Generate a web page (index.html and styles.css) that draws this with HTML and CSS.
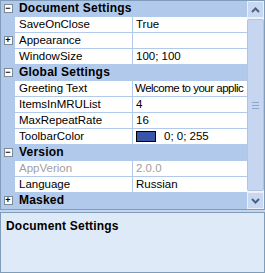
FILE: index.html
```
<!DOCTYPE html>
<html lang="en">
<head>
    <meta charset="UTF-8">
    <title>Property Grid</title>
    <link rel="stylesheet" href="styles.css">
</head>
<body>
    <div class="frame">
        <div class="grid">
            <div class="rows">
                <div class="row cat"><span class="gut"><span class="box">&minus;</span></span><span class="cat-name">Document Settings</span></div>
                <div class="row"><span class="gut"></span><span class="name">SaveOnClose</span><span class="value">True</span></div>
                <div class="row"><span class="gut"><span class="box">+</span></span><span class="name">Appearance</span><span class="value"></span></div>
                <div class="row"><span class="gut"></span><span class="name">WindowSize</span><span class="value">100; 100</span></div>
                <div class="row cat"><span class="gut"><span class="box">&minus;</span></span><span class="cat-name">Global Settings</span></div>
                <div class="row"><span class="gut"></span><span class="name">Greeting Text</span><span class="value tight">Welcome to your applic</span></div>
                <div class="row"><span class="gut"></span><span class="name">ItemsInMRUList</span><span class="value">4</span></div>
                <div class="row"><span class="gut"></span><span class="name">MaxRepeatRate</span><span class="value">16</span></div>
                <div class="row"><span class="gut"></span><span class="name">ToolbarColor</span><span class="value"><span class="swatch"></span>0; 0; 255</span></div>
                <div class="row cat"><span class="gut"><span class="box">&minus;</span></span><span class="cat-name">Version</span></div>
                <div class="row off"><span class="gut"></span><span class="name">AppVerion</span><span class="value">2.0.0</span></div>
                <div class="row"><span class="gut"></span><span class="name">Language</span><span class="value">Russian</span></div>
                <div class="row cat"><span class="gut"><span class="box">+</span></span><span class="cat-name">Masked</span></div>
            </div>
            <div class="scroll">
                <div class="arrow">
                    <svg width="9" height="6" viewBox="0 0 9 6"><path d="M1 5 L4.5 1.5 L8 5" fill="none" stroke="#4d6185" stroke-width="2"/></svg>
                </div>
                <div class="thumb">
                    <span class="grip"></span>
                </div>
                <div class="arrow">
                    <svg width="9" height="6" viewBox="0 0 9 6"><path d="M1 1 L4.5 4.5 L8 1" fill="none" stroke="#4d6185" stroke-width="2"/></svg>
                </div>
            </div>
        </div>
        <div class="help">
            <div class="help-title">Document Settings</div>
        </div>
    </div>
</body>
</html>
```

FILE: styles.css
```
body {
    margin: 0;
    font-family: 'Liberation Sans', Arial, sans-serif;
    font-size: 11.5px;
    color: #000;
}

.frame {
    width: 265px;
    height: 273px;
    background-color: #c4d6ef;
    display: flex;
    flex-direction: column;
    gap: 2px;
}

/* Сетка свойств */
.grid {
    height: 210px;
    display: flex;
    border: 1px solid #7f9db9;
    box-sizing: border-box;
    background-color: #b1c9eb;
}

.rows {
    flex: 1;
    display: flex;
    flex-direction: column;
    overflow: hidden;
}

.row {
    height: 16px;
    display: flex;
    flex-shrink: 0;
    background-color: #fff;
    border-bottom: 1px solid #b1c9eb;
    box-sizing: border-box;
}

.row.cat {
    background-color: #b1c9eb;
}

.gut {
    width: 14px;
    flex-shrink: 0;
    background-color: #b1c9eb;
    display: flex;
    align-items: center;
    justify-content: center;
}

.box {
    width: 7px;
    height: 7px;
    border: 1px solid #7f8a99;
    background-color: #fff;
    font-size: 9px;
    line-height: 7px;
    text-align: center;
    font-weight: bold;
    color: #000;
}

.cat-name {
    font-weight: bold;
    font-size: 12px;
    padding-left: 4px;
    line-height: 15px;
    letter-spacing: 0.2px;
}

.name {
    width: 118px;
    box-sizing: border-box;
    flex-shrink: 0;
    padding-left: 4px;
    line-height: 15px;
    border-right: 1px solid #b1c9eb;
    white-space: nowrap;
    overflow: hidden;
}

.value {
    flex: 1;
    padding-left: 3px;
    line-height: 15px;
    white-space: nowrap;
    overflow: hidden;
    display: flex;
    align-items: center;
}

.value.tight {
    padding-left: 2px;
    letter-spacing: -0.5px;
}

.off .name,
.off .value {
    color: #a0a0a0;
}

.swatch {
    width: 18px;
    height: 9px;
    border: 1px solid #000;
    background-color: #3a54a8;
    margin-right: 8px;
    flex-shrink: 0;
}

/* Полоса прокрутки */
.scroll {
    width: 17px;
    flex-shrink: 0;
    display: flex;
    flex-direction: column;
    background-color: #eef2f9;
}

.arrow {
    height: 17px;
    display: flex;
    align-items: center;
    justify-content: center;
    background-color: #c9d8f1;
    border: 1px solid #e9f0fa;
    box-sizing: border-box;
}

.thumb {
    flex: 1;
    margin: 1px 0;
    background-color: #c6d6f1;
    border: 1px solid #b2c4e2;
    border-radius: 2px;
    display: flex;
    align-items: center;
    justify-content: center;
}

.grip {
    width: 7px;
    height: 5px;
    border-top: 1px solid #8ea5cc;
    border-bottom: 1px solid #8ea5cc;
    position: relative;
}

.grip::after {
    content: "";
    position: absolute;
    left: 0;
    right: 0;
    top: 2px;
    border-top: 1px solid #8ea5cc;
}

/* Панель описания */
.help {
    flex: 1;
    border: 1px solid #7f9db9;
    background-color: #deeaf8;
    padding: 6px 5px;
}

.help-title {
    font-weight: bold;
    font-size: 12px;
    letter-spacing: 0.2px;
}
```
